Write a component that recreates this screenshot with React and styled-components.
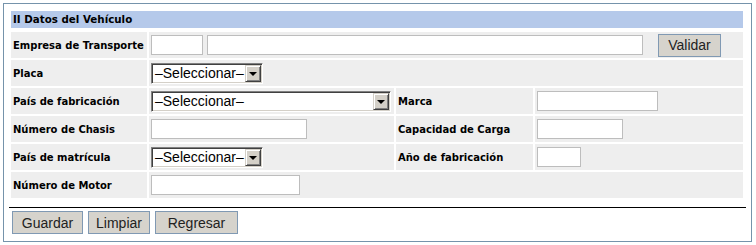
import React from 'react'
import styled, {createGlobalStyle} from 'styled-components'

const GlobalStyle = createGlobalStyle`
  body {
    margin: 0;
    background: #fff;
  }
`;

const Panel = styled.div`
  box-sizing: border-box;
  width: 749px;
  height: 239px;
  margin: 3px;
  border: 1px solid #7593ab;
  padding: 7px 8px 0 7px;
  background: #fff;
`;

const SectionTitle = styled.div`
  height: 17px;
  line-height: 17px;
  background-color: #b5c9ea;
  padding-left: 2px;
  font-family: "DejaVu Sans", Verdana, sans-serif;
  font-size: 10.3px;
  font-weight: bold;
  color: #000;
  margin-bottom: 4px;
`;

const Grid = styled.div`
  display: grid;
  grid-template-columns: 136px 245px 137px 208px;
  grid-auto-rows: 26px;
  gap: 2px;
`;

const Label = styled.div`
  display: flex;
  align-items: center;
  padding-left: 2px;
  background-color: #eeeeee;
  font-family: "DejaVu Sans", Verdana, sans-serif;
  font-size: 10px;
  font-weight: bold;
  color: #000;
  white-space: nowrap;
`;

const Value = styled.div`
  display: flex;
  align-items: center;
  padding-left: 2px;
  background-color: #eeeeee;
  grid-column: ${props => props.span ? `span ${props.span}` : 'auto'};
`;

const TextInput = styled.input`
  box-sizing: border-box;
  width: ${props => props.w}px;
  height: 20px;
  margin: 0 ${props => props.mr || 0}px 0 0;
  padding: 0 2px;
  border: 1px solid #bdbdbd;
  background: #fff;
  font-family: "Liberation Sans", Arial, sans-serif;
  font-size: 13px;
  outline: none;
`;

const SelectBox = styled.div`
  box-sizing: border-box;
  width: ${props => props.w}px;
  height: 21px;
  display: flex;
  align-items: stretch;
  background: #fff;
  border-style: solid;
  border-width: 1px;
  border-color: #808080 #ffffff #ffffff #808080;
  box-shadow: inset 1px 1px 0 #404040, inset -1px -1px 0 #d4d0c8;
  padding: 1px;
  font-family: "Liberation Sans", Arial, sans-serif;
  font-size: 14px;
  color: #000;
`;

const SelectText = styled.span`
  flex: 1;
  display: flex;
  align-items: center;
  padding-left: 2px;
  white-space: nowrap;
`;

const ArrowButton = styled.span`
  box-sizing: border-box;
  width: 16px;
  display: flex;
  align-items: center;
  justify-content: center;
  background-color: #d4d0c8;
  border-style: solid;
  border-width: 1px;
  border-color: #d4d0c8 #404040 #404040 #d4d0c8;
  box-shadow: inset 1px 1px 0 #ffffff, inset -1px -1px 0 #808080;
  &:after {
    content: '';
    width: 0;
    height: 0;
    border-left: 4px solid transparent;
    border-right: 4px solid transparent;
    border-top: 4px solid #000;
    margin-top: 1px;
  }
`;

const Button = styled.button`
  box-sizing: border-box;
  width: ${props => props.w}px;
  height: 23px;
  margin-left: ${props => props.ml || 0}px;
  padding: 0;
  border: 1px solid #8099b3;
  background-color: #d6d3cc;
  font-family: "Liberation Sans", Arial, sans-serif;
  font-size: 14px;
  color: #222;
  cursor: pointer;
`;

const Footer = styled.div`
  margin: 9px -3px 0 -2px;
  border-top: 1px solid #000;
  padding: 3px 0 0 3px;
  display: flex;
  gap: 5px;
`;

const Select = ({w}) => (
    <SelectBox w={w}>
        <SelectText>–Seleccionar–</SelectText>
        <ArrowButton/>
    </SelectBox>
)

export default function App() {
    return <>
        <GlobalStyle/>
        <Panel>
            <SectionTitle>II Datos del Vehículo</SectionTitle>
            <Grid>
                <Label>Empresa de Transporte</Label>
                <Value span={3}>
                    <TextInput w={52} mr={4}/>
                    <TextInput w={436}/>
                    <Button w={63} ml={15}>Validar</Button>
                </Value>

                <Label>Placa</Label>
                <Value span={3}>
                    <Select w={112}/>
                </Value>

                <Label>País de fabricación</Label>
                <Value>
                    <Select w={240}/>
                </Value>
                <Label>Marca</Label>
                <Value>
                    <TextInput w={121}/>
                </Value>

                <Label>Número de Chasis</Label>
                <Value>
                    <TextInput w={156}/>
                </Value>
                <Label>Capacidad de Carga</Label>
                <Value>
                    <TextInput w={86}/>
                </Value>

                <Label>País de matrícula</Label>
                <Value>
                    <Select w={112}/>
                </Value>
                <Label>Año de fabricación</Label>
                <Value>
                    <TextInput w={44}/>
                </Value>

                <Label>Número de Motor</Label>
                <Value span={3}>
                    <TextInput w={149}/>
                </Value>
            </Grid>
            <Footer>
                <Button w={71}>Guardar</Button>
                <Button w={62}>Limpiar</Button>
                <Button w={83}>Regresar</Button>
            </Footer>
        </Panel>
    </>
}
